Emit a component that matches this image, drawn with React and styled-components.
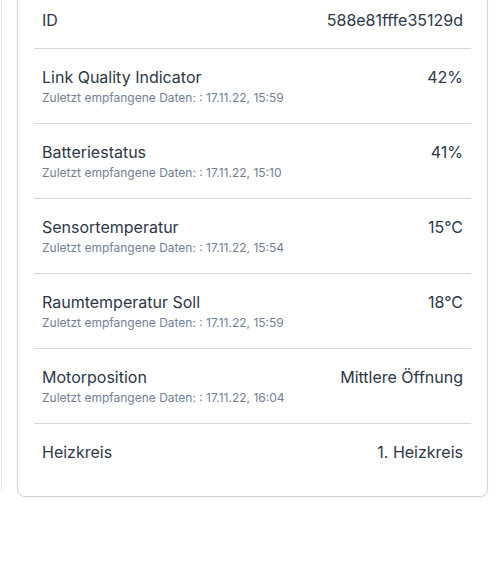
import React from "react";
import styled, { createGlobalStyle } from "styled-components";

const rows = [
  { label: "ID", value: "588e81fffe35129d" },
  { label: "Link Quality Indicator", value: "42%", time: "17.11.22, 15:59" },
  { label: "Batteriestatus", value: "41%", time: "17.11.22, 15:10" },
  { label: "Sensortemperatur", value: "15°C", time: "17.11.22, 15:54" },
  { label: "Raumtemperatur Soll", value: "18°C", time: "17.11.22, 15:59" },
  { label: "Motorposition", value: "Mittlere Öffnung", time: "17.11.22, 16:04" },
  { label: "Heizkreis", value: "1. Heizkreis" },
];

const App = () => {
  return (
    <Page>
      <GlobalStyle />
      <Columns>
        {/* edge of the neighbouring card, scrolled off to the left */}
        <NeighbourEdge />
        <Card>
          {rows.map((row) => (
            <Row key={row.label}>
              <Info>
                <Label>{row.label}</Label>
                {row.time && <Sub>Zuletzt empfangene Daten: : {row.time}</Sub>}
              </Info>
              <Value>{row.value}</Value>
            </Row>
          ))}
        </Card>
      </Columns>
    </Page>
  );
};

export default App;

const GlobalStyle = createGlobalStyle`
  body {
    margin: 0;
    background: #fff;
    font-family: Inter, "Noto Sans", sans-serif;
    color: #2d3748;
  }
`
const Page = styled.div`
  width: 502px;
  height: 562px;
  overflow: hidden;
  box-sizing: border-box;
  padding-right: 14px;
`
const Columns = styled.div`
  display: flex;
  align-items: flex-start;
  gap: 15px;
  margin-top: -25px;
`
const NeighbourEdge = styled.div`
  width: 1px;
  height: 516px;
  border-right: 1px solid #e6e6e6;
  border-bottom-right-radius: 6px;
  flex-shrink: 0;
`
const Card = styled.div`
  flex: 1;
  border: 1px solid #d4d4d4;
  border-radius: 8px;
  padding: 16px;
  background: #fff;
  box-shadow: 0 1px 2px rgba(0, 0, 0, 0.05);
`
const Row = styled.div`
  display: flex;
  justify-content: space-between;
  align-items: flex-start;
  padding: 16px 8px;
  & + & {
    border-top: 1px solid #d6d6d6;
  }
`
const Info = styled.div`
  display: flex;
  flex-direction: column;
`
const Label = styled.span`
  font-size: 16px;
  line-height: 24px;
`
const Sub = styled.span`
  font-size: 12px;
  line-height: 18px;
  color: #718096;
`
const Value = styled.span`
  font-size: 16px;
  line-height: 24px;
`
